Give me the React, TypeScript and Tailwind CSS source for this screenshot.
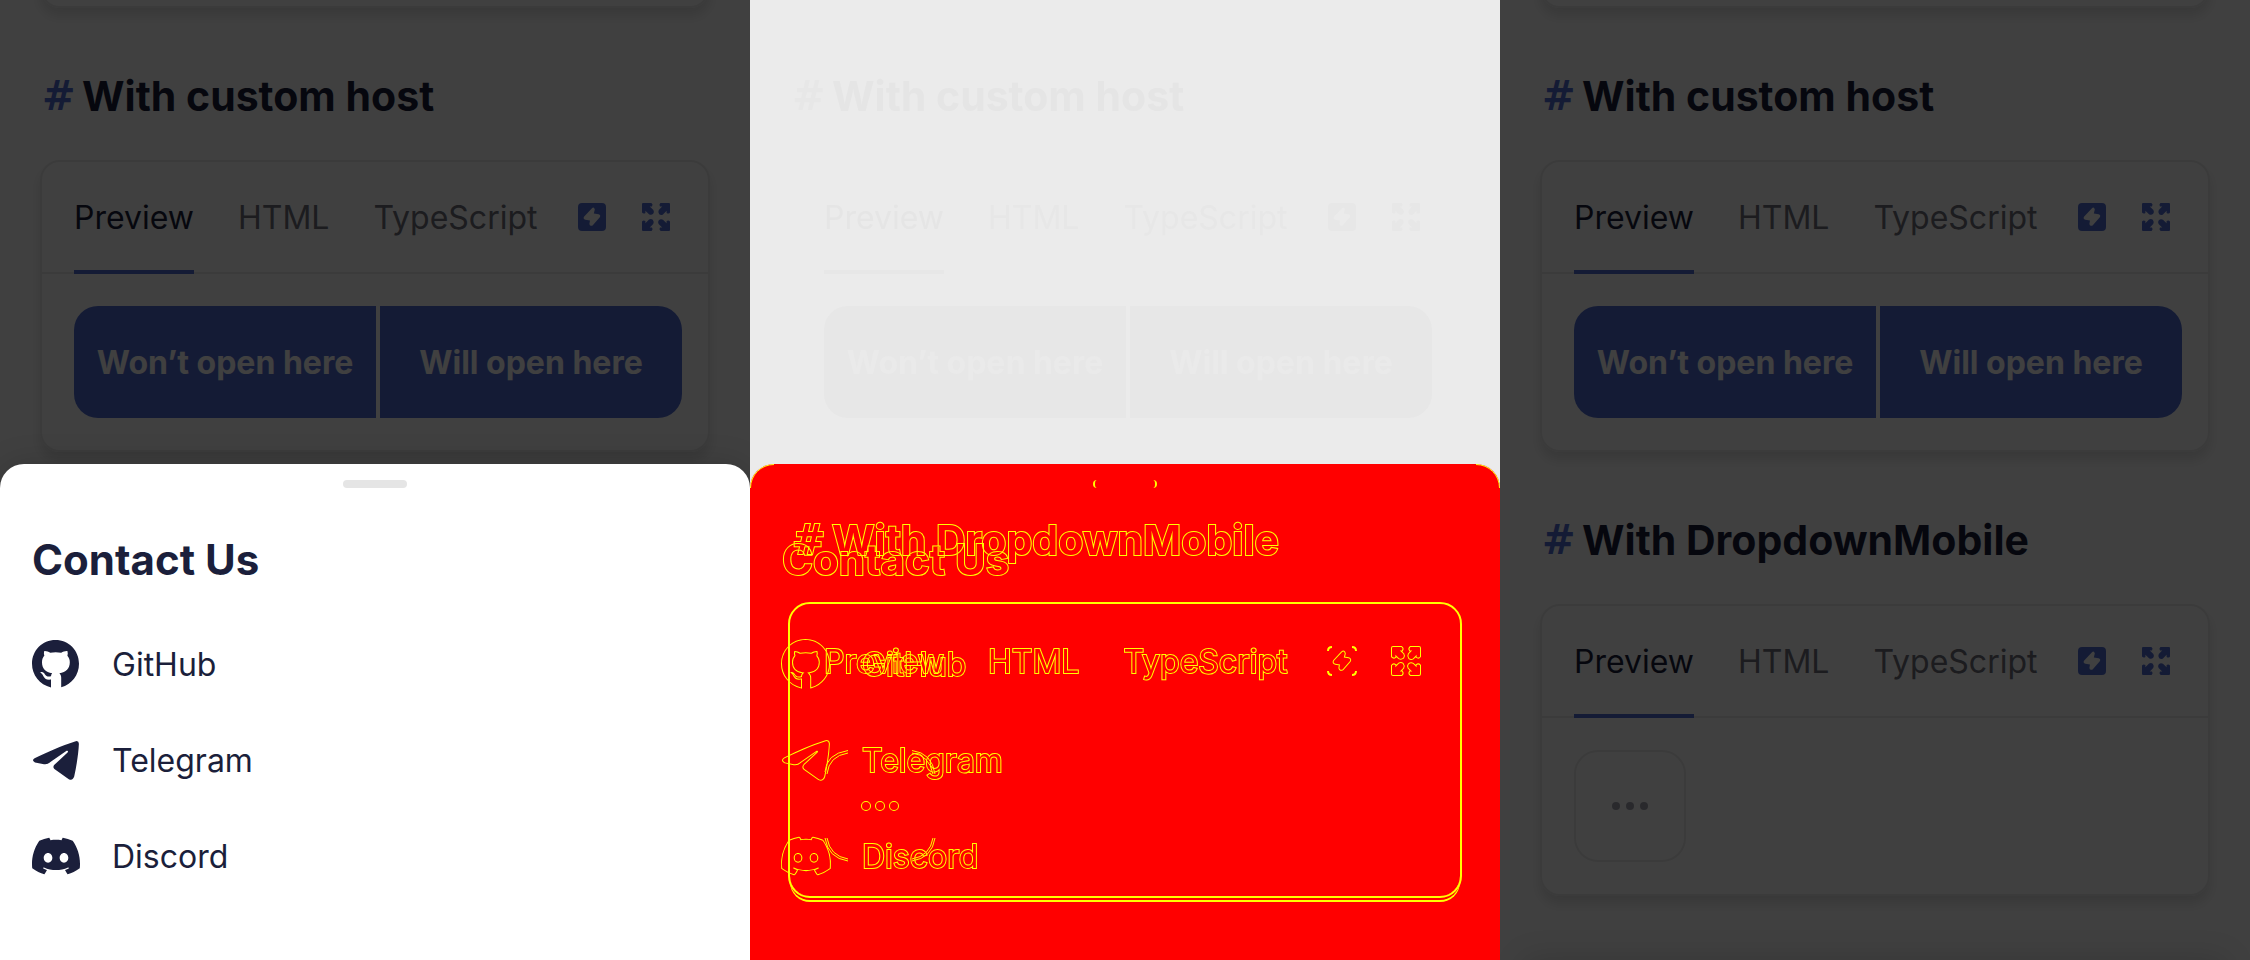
import type { ReactNode } from "react";
import { SiDiscord } from "react-icons/si";

type Tone = "solid" | "ghost" | "outline";

const OUTLINE_TEXT =
  "text-[#ff0000] [-webkit-text-stroke:2px_#ffff00] [paint-order:stroke_fill]";
const OUTLINE_ICON =
  "overflow-visible fill-[#ff0000] stroke-[#ffff00] stroke-2 [paint-order:stroke_fill] [&_path]:[vector-effect:non-scaling-stroke]";

const tones = {
  solid: {
    hash: "text-[#526ed3]",
    title: "text-[#1b1f3b]",
    card: "border-2 border-[#ebebeb] shadow-[0_8px_12px_rgba(0,0,0,0.12)]",
    divider: "border-[#ebebeb]",
    tab: "text-[#6f717c]",
    tabActive: "text-[#1b1f3b]",
    underline: "bg-[#526ed3]",
    icon: "fill-[#526ed3]",
    button: "bg-[#526ed3] text-white",
    more: "border-2 border-[#ebebeb] fill-[#a4a5b1]",
    sheetText: "text-[#1b1f3b]",
    sheetIcon: "fill-[#1b1f3b]",
    sheet: "bg-white shadow-[0_0_32px_rgba(0,0,0,0.16)]",
    handle: "bg-[#e5e5e5]",
  },
  ghost: {
    hash: "text-[#e7e7e7]",
    title: "text-[#e5e5e5]",
    card: "border-2 border-transparent",
    divider: "border-transparent",
    tab: "text-[#e7e7e7]",
    tabActive: "text-[#e5e5e5]",
    underline: "bg-[#e7e7e7]",
    icon: "fill-[#e7e7e7]",
    button: "bg-[#e7e7e7] text-[#eaeaea]",
    more: "border-transparent fill-[#e7e7e7]",
    sheetText: "text-[#e5e5e5]",
    sheetIcon: "fill-[#e5e5e5]",
    sheet: "",
    handle: "bg-[#e7e7e7]",
  },
  outline: {
    hash: OUTLINE_TEXT,
    title: OUTLINE_TEXT,
    card: "border-2 border-transparent outline-2 outline-[#ffff00] shadow-[0_4px_0_#ff0000,0_6px_0_#ffff00]",
    divider: "border-transparent",
    tab: OUTLINE_TEXT,
    tabActive: OUTLINE_TEXT,
    underline: "bg-transparent",
    icon: OUTLINE_ICON,
    button: OUTLINE_TEXT,
    more: OUTLINE_ICON,
    sheetText: OUTLINE_TEXT,
    sheetIcon: OUTLINE_ICON,
    sheet: "mix-blend-lighten",
    handle: "border-x-2 border-[#ffff00]",
  },
};

const BOLT =
  "M14 5.2L6.2 13.6Q4.6 16 7.4 16.7L12 17.4L11.4 21Q12 23.8 14.6 22.4L21.8 14.2Q23 12 20.6 11.3L15.8 10.6L16.8 6.4Q16 3.6 14 5.2Z";

function ZapIcon({ tone }: { tone: Tone }) {
  return (
    <svg viewBox="0 0 28 28" className={`size-7 overflow-visible ${tones[tone].icon}`} aria-hidden="true">
      {tone === "outline" ? (
        <>
          <path className="fill-none" d="M0 4Q0 0 4 0M24 0Q28 0 28 4M28 24Q28 28 24 28M4 28Q0 28 0 24" />
          <path d={BOLT} />
        </>
      ) : (
        <path
          fillRule="evenodd"
          d={`M4 0H24Q28 0 28 4V24Q28 28 24 28H4Q0 28 0 24V4Q0 0 4 0Z${BOLT}`}
        />
      )}
    </svg>
  );
}

const ARROW =
  "M0 1Q0 0 1 0H9.4Q11.4 1.4 10 3.4H7.8L11.4 7Q12.6 9 11.2 10.8Q9.2 12.4 7 11.2L3.4 7.8V10Q1.6 11.4 0 9.6Z";

function ExpandIcon({ tone }: { tone: Tone }) {
  return (
    <svg viewBox="0 0 28 28" className={`size-7 overflow-visible ${tones[tone].icon}`} aria-hidden="true">
      <path d={ARROW} />
      <path d={ARROW} transform="rotate(90 14 14)" />
      <path d={ARROW} transform="rotate(180 14 14)" />
      <path d={ARROW} transform="rotate(270 14 14)" />
    </svg>
  );
}

function GithubIcon({ className }: { className: string }) {
  return (
    <svg viewBox="0 0 48 48" className={`size-12 ${className}`} aria-hidden="true">
      <path d="M23.5 0C10.4 0 0 10.4 0 23.7C0 35 7.6 44.6 19 47.4V39.6C14.2 40.2 12.6 38.4 11.4 36.2C10.6 34.6 9.8 33.6 8.2 32.6C8.4 31.8 11.4 31.8 12.8 34.2C14.4 36.8 16.6 37 19 36.2C19.1 35 19.4 34 20.2 33.2C13.6 32.4 10 28.6 10 22.2C10 19.4 10.8 17.4 12.4 15.6C11.8 14 11.8 12.6 12.3 11C14.4 10.8 16.4 11.6 18.2 12.8C21.8 12 25.6 12 29.2 12.8C31 11.6 33.2 10.8 35.4 11C35.9 12.6 35.9 14.2 35.4 15.8C37 17.6 37.8 19.6 37.8 22.2C37.8 28.6 34 32.4 27.4 33.2C28.6 34.4 29.2 35.8 29.2 37.8V47.2C39.6 44.4 47 35 47 23.7C47 10.4 36.6 0 23.5 0Z" />
    </svg>
  );
}

function TelegramIcon({ className }: { className: string }) {
  return (
    <svg viewBox="0 0 48 48" className={`size-12 ${className}`} aria-hidden="true">
      <path d="M2.6 22.3C15 16 29.6 9.6 43 5.4Q46.8 4.2 46.9 7.8C46.4 18.4 44.4 30.4 42.2 40.6Q40.8 45 36.8 43.2L22.4 33Q20.4 31 22.4 28.8L35.6 16.4Q36.8 14.4 34.6 14.8L18.4 26Q15.4 28.8 12 28.2L3 26.4Q-.8 24.6 2.6 22.3Z" />
    </svg>
  );
}

/* The four rounded corners of the square button, each as a double contour. */
function CornerContours() {
  return (
    <svg viewBox="0 0 112 112" className="absolute inset-0 size-28 fill-none stroke-[#ffff00] stroke-1" aria-hidden="true">
      <path
        className="fill-none"
        d="M1 22Q2 4 24 0.5M3 24Q5 6 24 3M88 0.5Q108 3 111 24M88 3Q105 5 109 24M1 88Q4 108 24 111M3 88Q6 106 24 109M111 88Q108 108 88 111M109 88Q106 106 88 109"
      />
    </svg>
  );
}

function DemoSection({ title, tone, children }: { title: string; tone: Tone; children: ReactNode }) {
  const t = tones[tone];
  return (
    <section className="pt-16">
      <h2 className="mb-10 flex gap-2 pl-0.5 text-[41px] leading-12 font-bold">
        <span className={`w-8 font-['DejaVu_Sans',sans-serif] text-[40px] ${t.hash}`}>#</span>
        <span className={t.title}>{title}</span>
      </h2>
      <div className={`rounded-[20px] ${t.card}`}>
        <div className={`flex h-28 items-stretch gap-11 border-b-2 pr-7 pl-8 text-[32px] ${t.divider}`}>
          <button type="button" className={`relative pt-0.5 ${t.tabActive}`}>
            Preview
            <span className={`absolute inset-x-0 -bottom-0.5 h-1 ${t.underline}`} />
          </button>
          <button type="button" className={`pt-0.5 ${t.tab}`}>HTML</button>
          <button type="button" className={`pt-0.5 ${t.tab}`}>TypeScript</button>
          <div className="ml-auto flex items-center gap-4">
            <button type="button" aria-label="Edit on StackBlitz" className="-ml-8 flex size-12 items-center justify-center">
              <ZapIcon tone={tone} />
            </button>
            <button type="button" aria-label="Fullscreen" className="flex size-12 items-center justify-center">
              <ExpandIcon tone={tone} />
            </button>
          </div>
        </div>
        <div className="py-8 pr-[26px] pl-8">{children}</div>
      </div>
    </section>
  );
}

function HostButtons({ tone }: { tone: Tone }) {
  const t = tones[tone];
  return (
    <div className="grid grid-cols-2 gap-1 text-[32px] font-bold">
      <button type="button" className={`h-28 rounded-l-3xl pt-0.5 whitespace-nowrap ${t.button}`}>
        Won’t open here
      </button>
      <button type="button" className={`h-28 rounded-r-3xl pt-0.5 whitespace-nowrap ${t.button}`}>
        Will open here
      </button>
    </div>
  );
}

function MoreButton({ tone }: { tone: Tone }) {
  return (
    <button
      type="button"
      aria-label="More"
      className={`relative flex size-28 items-center justify-center rounded-3xl ${tones[tone].more}`}
    >
      <svg viewBox="0 0 36 8" className="h-2 w-9 overflow-visible" aria-hidden="true">
        <circle cx="4" cy="4" r="4" />
        <circle cx="18" cy="4" r="4" />
        <circle cx="32" cy="4" r="4" />
      </svg>
      {tone === "outline" && <CornerContours />}
    </button>
  );
}

function DocsPage({ first, second }: { first: Tone; second: Tone }) {
  return (
    <div className="relative px-10 pb-16">
      <div className={`-mt-8 h-10 rounded-b-[20px] ${tones[first].card}`} />
      <DemoSection title="With custom host" tone={first}>
        <HostButtons tone={first} />
      </DemoSection>
      <DemoSection title="With DropdownMobile" tone={second}>
        <MoreButton tone={second} />
      </DemoSection>
    </div>
  );
}

function ContactSheet({ tone }: { tone: Tone }) {
  const t = tones[tone];
  const contacts = [
    { name: "GitHub", icon: <GithubIcon className={t.sheetIcon} /> },
    { name: "Telegram", icon: <TelegramIcon className={t.sheetIcon} /> },
    { name: "Discord", icon: <SiDiscord className={`size-12 ${t.sheetIcon}`} aria-hidden="true" /> },
  ];
  return (
    <div className={`absolute inset-x-0 bottom-0 rounded-t-3xl px-8 pt-4 pb-14 ${t.sheet}`}>
      {tone === "outline" && (
        <>
          <svg viewBox="0 0 24 24" className="absolute top-0 left-0 size-6 fill-none stroke-[#ffff00]" aria-hidden="true">
            <path d="M0.5 24A23.5 23.5 0 0 1 24 0.5" />
          </svg>
          <svg viewBox="0 0 24 24" className="absolute top-0 right-0 size-6 fill-none stroke-[#ffff00]" aria-hidden="true">
            <path d="M23.5 24A23.5 23.5 0 0 0 0 0.5" />
          </svg>
        </>
      )}
      <div className={`mx-auto h-2 w-16 rounded-sm ${t.handle}`} />
      <h2 className={`mt-12 mb-8 text-[42px] leading-12 font-bold ${t.sheetText}`}>Contact Us</h2>
      <ul>
        {contacts.map((contact) => (
          <li key={contact.name}>
            <a href="#contact" className={`flex h-24 items-center gap-8 text-[32px] ${t.sheetText}`}>
              {contact.icon}
              <span className="pt-0.5">{contact.name}</span>
            </a>
          </li>
        ))}
      </ul>
    </div>
  );
}

export default function App() {
  return (
    <main className="grid min-h-screen grid-cols-3 font-['Inter','Liberation_Sans',sans-serif]">
      <div className="relative overflow-hidden bg-white">
        <DocsPage first="solid" second="solid" />
        <div className="absolute inset-0 bg-black/75" />
        <ContactSheet tone="solid" />
      </div>
      <div className="relative isolate overflow-hidden bg-[#ebebeb]">
        <div className="absolute inset-x-0 bottom-0 h-[496px] rounded-t-3xl bg-[#ff0000]" />
        <DocsPage first="ghost" second="outline" />
        <ContactSheet tone="outline" />
      </div>
      <div className="relative overflow-hidden bg-white">
        <DocsPage first="solid" second="solid" />
        <div className="absolute inset-0 bg-black/75" />
        <div className="absolute inset-x-6 top-full h-10 shadow-[0_0_32px_rgba(0,0,0,0.16)]" />
      </div>
    </main>
  );
}
